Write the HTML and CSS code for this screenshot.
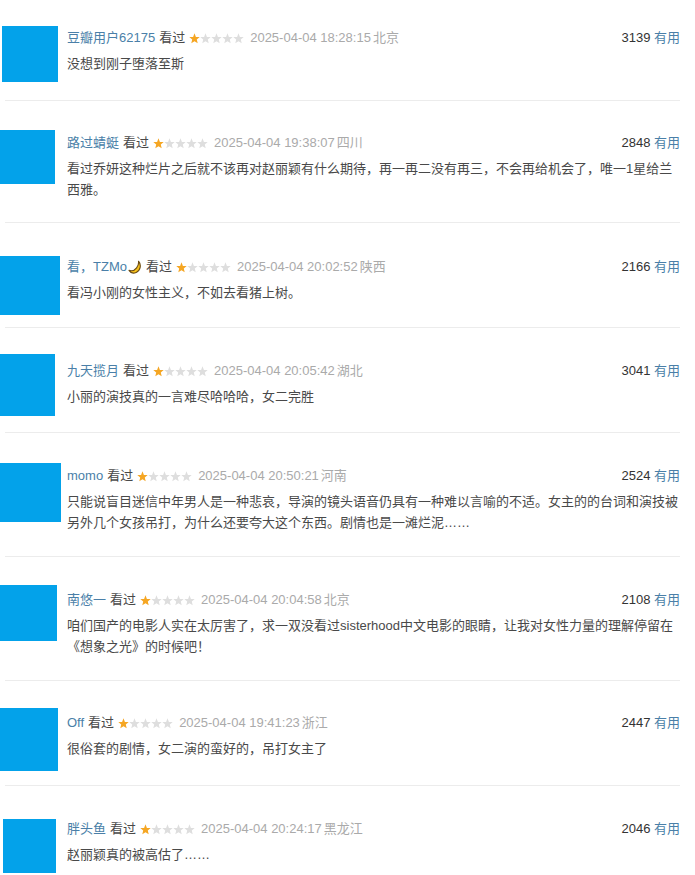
FILE: index.html
```html
<!DOCTYPE html>
<html lang="zh-CN">
<head>
<meta charset="utf-8">
<title>短评</title>
<link rel="stylesheet" href="styles.css">
</head>
<body>
<svg width="0" height="0" class="defs">
  <defs>
    <polygon id="st" points="5.5,0.3 6.9,3.9 10.7,4.1 7.8,6.5 8.7,10.3 5.5,8.2 2.3,10.3 3.2,6.5 0.3,4.1 4.1,3.9"/>
    <g id="stars">
      <use href="#st" x="0" fill="#f5a623"/>
      <use href="#st" x="11" fill="#dedede"/>
      <use href="#st" x="22" fill="#dedede"/>
      <use href="#st" x="33" fill="#dedede"/>
      <use href="#st" x="44" fill="#dedede"/>
    </g>
  </defs>
</svg>
<div class="list">

  <div class="item r1">
    <div class="avcol"><div class="avatar"></div></div>
    <div class="text">
      <div class="info">
        <div class="left"><a class="name">豆瓣用户62175</a> <span class="seen">看过</span> <svg class="rating" width="55" height="11" viewBox="0 0 55 11"><use href="#stars"/></svg> <span class="time">2025-04-04 18:28:15</span> <span class="loc">北京</span></div>
        <div class="votes"><span class="count">3139</span> <a class="useful">有用</a></div>
      </div>
      <p class="content">没想到刚子堕落至斯</p>
    </div>
  </div>
  <div class="divider"></div>

  <div class="item r2">
    <div class="avcol"><div class="avatar"></div></div>
    <div class="text">
      <div class="info">
        <div class="left"><a class="name">路过蜻蜓</a> <span class="seen">看过</span> <svg class="rating" width="55" height="11" viewBox="0 0 55 11"><use href="#stars"/></svg> <span class="time">2025-04-04 19:38:07</span> <span class="loc">四川</span></div>
        <div class="votes"><span class="count">2848</span> <a class="useful">有用</a></div>
      </div>
      <p class="content">看过乔妍这种烂片之后就不该再对赵丽颖有什么期待，再一再二没有再三，不会再给机会了，唯一1星给兰西雅。</p>
    </div>
  </div>
  <div class="divider"></div>

  <div class="item r3">
    <div class="avcol"><div class="avatar"></div></div>
    <div class="text">
      <div class="info">
        <div class="left"><a class="name">看，TZMo<svg class="moon" width="14" height="14" viewBox="0 0 14 14"><path d="M10.5 1.2 C13.6 4.6 12.6 10.6 8.2 12.4 C5.4 13.6 2.4 12.6 1 10.4 C3.6 11.2 6.8 10.2 8.6 7.8 C10.2 5.8 10.8 3.4 10.5 1.2 Z" fill="#f7c21a" stroke="#6b4a12" stroke-width="1.1" stroke-linejoin="round"/></svg></a> <span class="seen">看过</span> <svg class="rating" width="55" height="11" viewBox="0 0 55 11"><use href="#stars"/></svg> <span class="time">2025-04-04 20:02:52</span> <span class="loc">陕西</span></div>
        <div class="votes"><span class="count">2166</span> <a class="useful">有用</a></div>
      </div>
      <p class="content">看冯小刚的女性主义，不如去看猪上树。</p>
    </div>
  </div>
  <div class="divider"></div>

  <div class="item r4">
    <div class="avcol"><div class="avatar"></div></div>
    <div class="text">
      <div class="info">
        <div class="left"><a class="name">九天揽月</a> <span class="seen">看过</span> <svg class="rating" width="55" height="11" viewBox="0 0 55 11"><use href="#stars"/></svg> <span class="time">2025-04-04 20:05:42</span> <span class="loc">湖北</span></div>
        <div class="votes"><span class="count">3041</span> <a class="useful">有用</a></div>
      </div>
      <p class="content">小丽的演技真的一言难尽哈哈哈，女二完胜</p>
    </div>
  </div>
  <div class="divider"></div>

  <div class="item r5">
    <div class="avcol"><div class="avatar"></div></div>
    <div class="text">
      <div class="info">
        <div class="left"><a class="name">momo</a> <span class="seen">看过</span> <svg class="rating" width="55" height="11" viewBox="0 0 55 11"><use href="#stars"/></svg> <span class="time">2025-04-04 20:50:21</span> <span class="loc">河南</span></div>
        <div class="votes"><span class="count">2524</span> <a class="useful">有用</a></div>
      </div>
      <p class="content">只能说盲目迷信中年男人是一种悲哀，导演的镜头语音仍具有一种难以言喻的不适。女主的的台词和演技被另外几个女孩吊打，为什么还要夸大这个东西。剧情也是一滩烂泥……</p>
    </div>
  </div>
  <div class="divider"></div>

  <div class="item r6">
    <div class="avcol"><div class="avatar"></div></div>
    <div class="text">
      <div class="info">
        <div class="left"><a class="name">南悠一</a> <span class="seen">看过</span> <svg class="rating" width="55" height="11" viewBox="0 0 55 11"><use href="#stars"/></svg> <span class="time">2025-04-04 20:04:58</span> <span class="loc">北京</span></div>
        <div class="votes"><span class="count">2108</span> <a class="useful">有用</a></div>
      </div>
      <p class="content">咱们国产的电影人实在太厉害了，求一双没看过sisterhood中文电影的眼睛，让我对女性力量的理解停留在《想象之光》的时候吧！</p>
    </div>
  </div>
  <div class="divider"></div>

  <div class="item r7">
    <div class="avcol"><div class="avatar"></div></div>
    <div class="text">
      <div class="info">
        <div class="left"><a class="name">Off</a> <span class="seen">看过</span> <svg class="rating" width="55" height="11" viewBox="0 0 55 11"><use href="#stars"/></svg> <span class="time">2025-04-04 19:41:23</span> <span class="loc">浙江</span></div>
        <div class="votes"><span class="count">2447</span> <a class="useful">有用</a></div>
      </div>
      <p class="content">很俗套的剧情，女二演的蛮好的，吊打女主了</p>
    </div>
  </div>
  <div class="divider"></div>

  <div class="item r8">
    <div class="avcol"><div class="avatar"></div></div>
    <div class="text">
      <div class="info">
        <div class="left"><a class="name">胖头鱼</a> <span class="seen">看过</span> <svg class="rating" width="55" height="11" viewBox="0 0 55 11"><use href="#stars"/></svg> <span class="time">2025-04-04 20:24:17</span> <span class="loc">黑龙江</span></div>
        <div class="votes"><span class="count">2046</span> <a class="useful">有用</a></div>
      </div>
      <p class="content">赵丽颖真的被高估了……</p>
    </div>
  </div>

</div>
</body>
</html>
```

FILE: styles.css
```css
html, body {
  margin: 0;
  padding: 0;
  background: #fff;
}
body {
  font-family: "Liberation Sans", "Noto Sans CJK SC", sans-serif;
  font-size: 13px;
  color: #494949;
  overflow: hidden;
}
.defs {
  position: absolute;
  width: 0;
  height: 0;
}
.list {
  width: 695px;
}
.item {
  display: flex;
  align-items: flex-start;
}
.avcol {
  width: 67px;
  flex: none;
}
.avatar {
  background: #03a2ea;
}
.text {
  width: 613px;
  flex: none;
}
.info {
  display: flex;
  justify-content: space-between;
  align-items: center;
  height: 20px;
  line-height: 20px;
  white-space: nowrap;
}
.left {
  display: flex;
  align-items: center;
  gap: 4px;
}
.name {
  color: #4a7fa8;
  display: inline-flex;
  align-items: center;
}
.seen {
  color: #494949;
}
.rating {
  display: block;
  margin: 0 2px 0 0;
}
.time, .loc {
  color: #aaa;
  font-size: 13px;
}
.time {
  margin-right: -2px;
}
.moon {
  display: block;
  margin-left: 1px;
}
.votes {
  color: #333;
}
.useful {
  color: #4a7fa8;
}
.content {
  margin: 5px 0 0;
  line-height: 21px;
  color: #494949;
}
.divider {
  height: 1px;
  background: #ececec;
  margin-left: 5px;
  width: 675px;
}

/* per-entry geometry (pasted screenshots of varying crop) */
.r1 .text { padding: 28px 0 26px; }
.r1 .avatar { margin: 26px 0 0 2px; width: 56px; height: 56px; }
.r2 .text { padding: 32px 0 22px; }
.r2 .avatar { margin-top: 29px; width: 55px; height: 54px; }
.r3 .text { padding: 34px 0 24px; }
.r3 .avatar { margin-top: 33px; width: 60px; height: 59px; }
.r4 .text { padding: 33px 0 25px; }
.r4 .avatar { margin-top: 26px; width: 55px; height: 62px; }
.r5 .text { padding: 33px 0 23px; }
.r5 .avatar { margin-top: 30px; width: 61px; height: 59px; }
.r6 .text { padding: 33px 0 23px; }
.r6 .avatar { margin-top: 28px; width: 57px; height: 56px; }
.r7 .text { padding: 32px 0 26px; }
.r7 .avatar { margin-top: 27px; width: 58px; height: 63px; }
.r8 .text { padding: 33px 0 20px; }
.r8 .avatar { margin: 33px 0 0 3px; width: 53px; height: 54px; }
```
